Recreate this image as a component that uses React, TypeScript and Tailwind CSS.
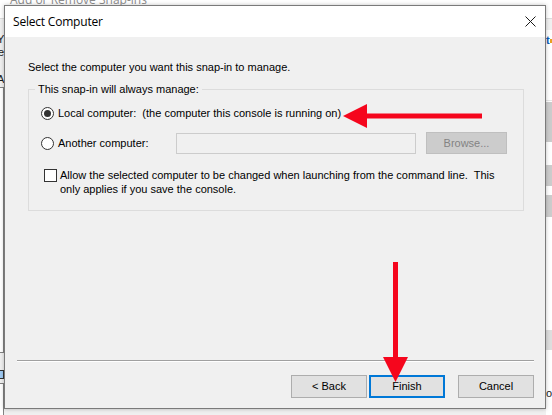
import React from "react";

function Radio({ checked }: { checked?: boolean }) {
  return (
    <span className="flex items-center justify-center w-[13px] h-[13px] rounded-full border border-[#333333] bg-white shrink-0">
      {checked ? <span className="block w-[7px] h-[7px] rounded-full bg-[#333333]" /> : null}
    </span>
  );
}

export default function App() {
  return (
    <div className="relative w-[552px] h-[415px] overflow-hidden bg-[#f0f0f0] font-['Liberation_Sans',Arial,sans-serif] text-[11px] text-black">
      {/* Parent window (behind) */}
      <div className="absolute left-0 top-0 w-[552px] h-[18px] bg-white" />
      <div className="absolute left-[10px] top-[-8px] text-[12px] leading-[16px] text-[#8c8c8c] font-['Open_Sans',sans-serif] whitespace-nowrap">
        Add or Remove Snap-ins
      </div>
      <div className="absolute left-0 top-[18px] w-[552px] h-[1px] bg-[#dcdcdc]" />
      <span className="absolute left-[-3px] top-[33px] leading-[13px] text-[#1a1a1a]">Y</span>
      <span className="absolute left-[-2px] top-[46px] leading-[13px] text-[#1a1a1a]">e</span>
      <span className="absolute left-[-3px] top-[73px] leading-[13px] text-[#1a1a1a]">A</span>
      <div className="absolute left-[-10px] top-[87px] w-[14px] h-[266px] border border-[#828282] bg-white" />
      <div className="absolute left-[-4px] top-[370px] w-[8px] h-[9px] border border-[#333333] bg-[#9ec9f2]" />
      <div className="absolute left-[-10px] top-[383px] w-[14px] h-[40px] border border-[#828282] bg-white" />

      <div className="absolute left-[546px] top-[30px] w-[10px] h-[385px] bg-white" />
      <span className="absolute left-[546px] top-[34px] leading-[13px] text-[#0a5ab4] font-bold">t</span>
      <span className="absolute left-[550px] top-[39px] w-[3px] h-[4px] bg-[#e8a020]" />
      <div className="absolute left-[546px] top-[100px] w-[10px] h-[1px] bg-[#e6e6e6]" />
      <div className="absolute left-[546px] top-[102px] w-[10px] h-[40px] bg-[#cccccc]" />
      <div className="absolute left-[546px] top-[165px] w-[10px] h-[21px] bg-[#cccccc]" />
      <div className="absolute left-[546px] top-[195px] w-[10px] h-[22px] bg-[#cccccc]" />
      <div className="absolute left-[546px] top-[330px] w-[10px] h-[20px] bg-[#dedede]" />
      <span className="absolute left-[546px] top-[387px] leading-[13px] text-[#1a1a1a]">or</span>

      {/* Dialog */}
      <div className="absolute left-[4px] top-[5px] w-[542px] h-[404px] border border-[#7a7a7a] bg-[#f0f0f0] flex flex-col shadow-[0_0_4px_rgba(0,0,0,0.25)]">
        {/* Title bar */}
        <div className="h-[31px] bg-white flex items-center pl-[8px] shrink-0">
          <span className="text-[12px] text-black font-['Open_Sans',sans-serif] tracking-[-0.2px]">Select Computer</span>
          <svg className="ml-auto mr-[9px]" width="11" height="11" viewBox="0 0 11 11">
            <path d="M0.5 0.5 L10.5 10.5 M10.5 0.5 L0.5 10.5" stroke="#1a1a1a" strokeWidth="1" fill="none" />
          </svg>
        </div>

        {/* Body */}
        <div className="flex-1 flex flex-col">
          <div className="mt-[24px] ml-[23px] leading-[13px]">Select the computer you want this snap-in to manage.</div>

          <fieldset className="mt-[9px] ml-[23px] mr-[21px] h-[128px] border border-[#dcdcdc]">
            <legend className="ml-[6px] px-[3px] leading-[13px]">This snap-in will always manage:</legend>
            <div className="pl-[12px] flex flex-col">
              <div className="mt-[11px] h-[13px] flex items-center gap-[4px]">
                <Radio checked />
                <span className="leading-[13px] whitespace-pre">Local computer:  (the computer this console is running on)</span>
              </div>
              <div className="mt-[12px] h-[22px] flex items-center">
                <div className="w-[135px] flex items-center gap-[4px]">
                  <Radio />
                  <span className="leading-[13px]">Another computer:</span>
                </div>
                <div className="w-[240px] h-[21px] border border-[#cccccc] bg-[#f0f0f0]" />
                <div className="ml-[10px] w-[81px] h-[22px] border border-[#bfbfbf] bg-[#cccccc] flex items-center justify-center text-[#838383]">
                  Browse...
                </div>
              </div>
              <div className="mt-[14px] ml-[3px] flex items-start gap-[3px]">
                <span className="mt-[1px] w-[13px] h-[13px] border border-[#333333] bg-white shrink-0" />
                <span className="leading-[14px] whitespace-pre">
                  Allow the selected computer to be changed when launching from the command line.  This
                  <br />
                  only applies if you save the console.
                </span>
              </div>
            </div>
          </fieldset>

          <div className="flex-1" />

          <div className="ml-[12px] mr-[11px] h-[2px] border-t border-[#a0a0a0] bg-white" />

          <div className="mt-[13px] mb-[10px] mr-[11px] flex justify-end">
            <div className="w-[76px] h-[23px] border border-[#adadad] bg-[#e1e1e1] flex items-center justify-center">&lt; Back</div>
            <div className="ml-[2px] w-[76px] h-[23px] border-2 border-[#0078d7] bg-[#e1e1e1] flex items-center justify-center">Finish</div>
            <div className="ml-[13px] w-[76px] h-[23px] border border-[#adadad] bg-[#e1e1e1] flex items-center justify-center">Cancel</div>
          </div>
        </div>
      </div>

      {/* Red annotation arrows */}
      <svg className="absolute left-0 top-0 pointer-events-none" width="552" height="415" viewBox="0 0 552 415">
        <line x1="482" y1="116" x2="362" y2="116" stroke="#f5061d" strokeWidth="5" />
        <polygon points="343,116 367,104 367,128" fill="#f5061d" />
        <line x1="395.5" y1="262" x2="395.5" y2="362" stroke="#f5061d" strokeWidth="5" />
        <polygon points="383,357 408,357 395.5,382" fill="#f5061d" />
      </svg>
    </div>
  );
}
